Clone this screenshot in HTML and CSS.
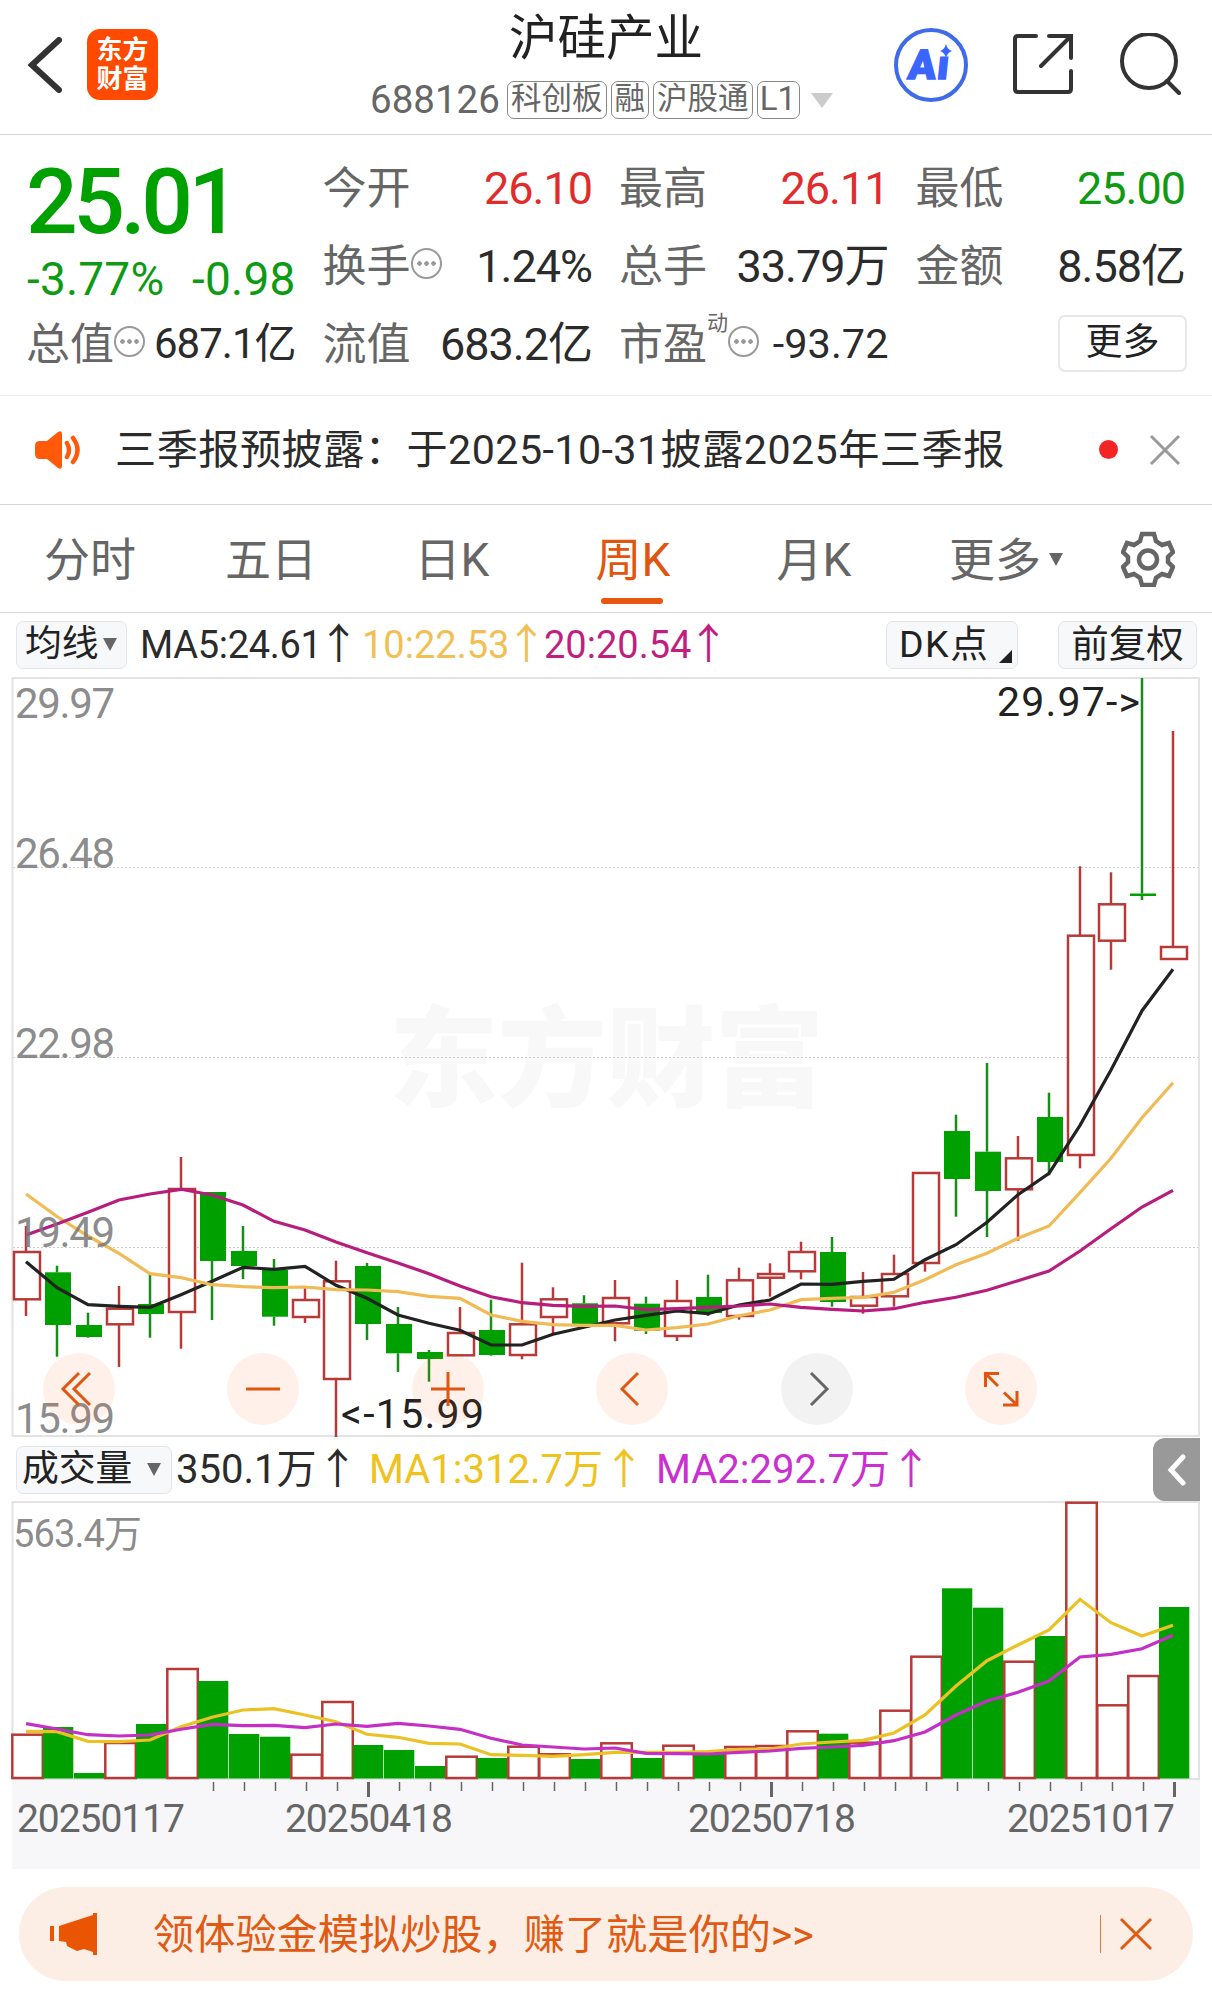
FILE: index.html
```html
<!DOCTYPE html>
<html lang="zh-CN">
<head>
    <meta charset="UTF-8">
    <meta name="viewport" content="width=device-width, initial-scale=1.0">
    <title>沪硅产业 688126</title>
    <link rel="stylesheet" href="styles.css">
</head>
<body>
    <header class="header">
        <div class="header-left">
            <svg class="back" width="34" height="56" viewBox="0 0 34 56"><path d="M31 3 L4 28 L31 53" /></svg>
            <div class="logo"><span>东方</span><span>财富</span></div>
        </div>
        <div class="header-title">
            <h1>沪硅产业</h1>
            <div class="tags">
                <span class="code">688126</span>
                <span class="tag">科创板</span>
                <span class="tag">融</span>
                <span class="tag">沪股通</span>
                <span class="tag tag-level">L1</span>
                <span class="tri tri-light"></span>
            </div>
        </div>
        <div class="header-icons">
            <svg width="76" height="76" viewBox="0 0 76 76">
                <circle cx="38" cy="38" r="35" fill="none" stroke="#3f6be8" stroke-width="4" />
                <text class="ai-text" transform="translate(14 52) skewX(-6)">Aı</text>
                <path d="M53 17 Q54.500 22.500 59 24 Q54.500 25.500 53 31 Q51.500 25.500 47 24 Q51.500 22.500 53 17 Z" fill="#3a66ff" />
            </svg>
            <svg class="line-icon" width="60" height="60" viewBox="0 0 60 60">
                <path d="M23 2 H5 Q2 2 2 5 V55 Q2 58 5 58 H55 Q58 58 58 55 V37 M36 2 H58 V24 M57 3 L28 32" />
            </svg>
            <svg class="line-icon" width="62" height="62" viewBox="0 0 62 62">
                <circle cx="29" cy="28" r="27" /><path d="M47 48 L59 60" />
            </svg>
        </div>
    </header>

    <section class="quote">
        <div class="price-block">
            <div class="price">25.01</div>
            <div class="change"><span>-3.77%</span><span>-0.98</span></div>
        </div>
        <div class="cell"><span class="label">今开</span><span class="value up">26.10</span></div>
        <div class="cell"><span class="label">最高</span><span class="value up">26.11</span></div>
        <div class="cell"><span class="label">最低</span><span class="value down">25.00</span></div>
        <div class="cell"><span class="label">换手</span><i class="dots"></i><span class="value">1.24%</span></div>
        <div class="cell"><span class="label">总手</span><span class="value">33.79万</span></div>
        <div class="cell"><span class="label">金额</span><span class="value">8.58亿</span></div>
        <div class="cell"><span class="label">总值</span><i class="dots"></i><span class="value small">687.1亿</span></div>
        <div class="cell"><span class="label">流值</span><span class="value mid">683.2亿</span></div>
        <div class="cell"><span class="label">市盈</span><sup>动</sup><i class="dots"></i><span class="value tiny">-93.72</span></div>
        <div class="cell"><button class="more-btn">更多</button></div>
    </section>

    <section class="notice">
        <svg width="48" height="40" viewBox="0 0 48 40">
            <path d="M6 11 H13 L24 2 Q28 0 28 4 V36 Q28 40 24 38 L13 29 H6 Q1 29 1 24 V16 Q1 11 6 11 Z" fill="#ff5a0a" />
            <path d="M33 13 Q37 20 33 27 M39 8 Q48 20 39 32" fill="none" stroke="#ff5a0a" stroke-width="4.500" stroke-linecap="round" />
        </svg>
        <p>三季报预披露：于2025-10-31披露2025年三季报</p>
        <span class="red-dot"></span>
        <svg class="close" width="32" height="32" viewBox="0 0 32 32"><path d="M2 2 L30 30 M30 2 L2 30" /></svg>
    </section>

    <nav class="tabs">
        <a class="tab">分时</a>
        <a class="tab">五日</a>
        <a class="tab">日K</a>
        <a class="tab active">周K</a>
        <a class="tab">月K</a>
        <a class="tab tab-more">更多<span class="tri"></span></a>
        <svg class="gear" width="54" height="56" viewBox="0 0 54 56">
            <path d="M21 3 H33 L35 10 L41 14 L48 12 L52 21 L47 26 V31 L52 36 L48 45 L41 43 L35 47 L33 54 H21 L19 47 L13 43 L6 45 L2 36 L7 31 V26 L2 21 L6 12 L13 14 L19 10 Z" />
            <circle cx="27" cy="28.500" r="9" />
        </svg>
    </nav>

    <section class="ma-bar">
        <span class="chip chip-ma">均线<span class="tri"></span></span>
        <span class="ma ma5">MA5:24.61<b>↑</b></span>
        <span class="ma ma10">10:22.53<b>↑</b></span>
        <span class="ma ma20">20:20.54<b>↑</b></span>
        <span class="chip chip-dk">DK点<i class="corner"></i></span>
        <span class="chip chip-fq">前复权</span>
    </section>

    <svg id="kline" class="kline" width="1212" height="762" viewBox="0 676 1212 762"></svg>

    <section class="vol-bar">
        <span class="chip chip-vol">成交量<span class="tri"></span></span>
        <span class="vol vol-now">350.1万<b>↑</b></span>
        <span class="vol vol-ma1">MA1:312.7万<b>↑</b></span>
        <span class="vol vol-ma2">MA2:292.7万<b>↑</b></span>
        <span class="drawer">
            <svg width="20" height="32" viewBox="0 0 20 32"><path d="M16 3 L4 16 L16 29" /></svg>
        </span>
    </section>

    <svg id="volume" class="volume" width="1212" height="368" viewBox="0 1501 1212 368"></svg>

    <footer class="banner">
        <svg width="48" height="42" viewBox="0 0 48 42">
            <path d="M0 13 H4 V28 H0 Z M9 13 L43 2 V0 H47 V42 H43 V39 L34 36 L27 38 L17 33 L16 29 L9 28 Z" fill="#ea5504" />
        </svg>
        <p>领体验金模拟炒股，赚了就是你的&gt;&gt;</p>
        <span class="divider"></span>
        <svg class="close" width="34" height="34" viewBox="0 0 34 34"><path d="M2 2 L32 32 M32 2 L2 32" /></svg>
    </footer>

    <script src="chart.js"></script>
</body>
</html>
```

FILE: styles.css
```css
* {
    margin: 0;
    padding: 0;
    box-sizing: border-box;
}

body {
    width: 1212px;
    background-color: #fff;
    color: #2b2b2b;
    font-family: Roboto, "Noto Sans CJK SC", sans-serif;
    line-height: 1;
}

svg {
    display: block;
    flex-shrink: 0;
}

.tri {
    display: inline-block;
    border-left: 7.5px solid transparent;
    border-right: 7.5px solid transparent;
    border-top: 13px solid #666;
}

.tri-light {
    border-left-width: 11px;
    border-right-width: 11px;
    border-top: 15px solid #ccc;
}

.close {
    fill: none;
    stroke: #999;
    stroke-width: 3;
}

/* header */
.header {
    height: 135px;
    display: grid;
    grid-template-columns: 360px 1fr 360px;
    border-bottom: 1px solid #d5d5d5;
}

.header-left {
    display: flex;
    align-items: center;
    height: 129px;
    padding-left: 28px;
}

.back {
    fill: none;
    stroke: #333;
    stroke-width: 6;
    stroke-linecap: round;
}

.logo {
    width: 71px;
    height: 71px;
    margin-left: 25px;
    border-radius: 13px;
    background-color: #ff4a00;
    color: #fff;
    font-size: 26px;
    font-weight: bold;
    display: flex;
    flex-direction: column;
    align-items: center;
    justify-content: center;
    gap: 3px;
}

.header-title {
    padding-top: 15px;
}

.header-title h1 {
    font-size: 48.5px;
    font-weight: normal;
    text-align: center;
    white-space: nowrap;
    color: #222;
}

.tags {
    display: flex;
    align-items: center;
    height: 38px;
    margin-top: 17.5px;
    padding-left: 10px;
    gap: 4px;
    white-space: nowrap;
}

.code {
    width: 133px;
    font-size: 38.5px;
    color: #666;
}

.tag {
    height: 38px;
    padding: 0 3px;
    border: 1.5px solid #888;
    border-radius: 7px;
    font-size: 30.5px;
    line-height: 34px;
    color: #666;
}

.tag-level {
    width: 43px;
    padding: 0;
    font-size: 33px;
    text-align: center;
}

.tags .tri {
    margin-left: 7px;
}

.header-icons {
    display: flex;
    align-items: center;
    height: 129px;
    padding-left: 41px;
}

.header-icons .line-icon {
    margin-left: 44px;
    margin-bottom: 1px;
    fill: none;
    stroke: #333;
    stroke-width: 4;
    stroke-linecap: round;
}

.header-icons .line-icon + .line-icon {
    margin-left: 47px;
}

.ai-text {
    font-size: 41px;
    font-weight: 900;
    letter-spacing: 1px;
    fill: #3a66ff;
    stroke: #3a66ff;
    stroke-width: 1.500;
}

/* quote */
.quote {
    display: grid;
    grid-template-columns: repeat(4, 1fr);
    grid-template-rows: repeat(3, 78px);
    column-gap: 29px;
    padding: 13px 27px 13px 28px;
    border-bottom: 1px solid #ececec;
}

.price-block {
    grid-row: span 2;
    color: #00a000;
}

.price {
    margin-top: 9px;
    margin-left: -2px;
    font-size: 91px;
    font-weight: 500;
    letter-spacing: -4.500px;
}

.change {
    display: flex;
    justify-content: space-between;
    margin-top: 8px;
    font-size: 46px;
    letter-spacing: 0.2px;
    margin-left: -1px;
    color: #0f9a14;
}

.cell {
    display: flex;
    align-items: center;
    white-space: nowrap;
}

.label {
    margin-left: -2px;
    padding-top: 4px;
    font-size: 44px;
    color: #666;
}

.value {
    margin-left: auto;
    padding-top: 2px;
    font-size: 45px;
    letter-spacing: -1px;
}

.small {
    font-size: 42px;
}

.mid {
    font-size: 45px;
}

.tiny {
    font-size: 41.5px;
    letter-spacing: 0;
}

.up {
    color: #e02c2c;
}

.down {
    color: #0f9a14;
}

.cell sup {
    align-self: flex-start;
    margin-top: 9px;
    font-size: 21px;
    color: #666;
}

.dots {
    width: 31px;
    height: 31px;
    flex-shrink: 0;
    border: 2px solid #999;
    border-radius: 50%;
    margin-bottom: 3px;
    background: radial-gradient(circle, #999 2px, transparent 2.5px) center / 7px 7px no-repeat,
        radial-gradient(circle, #999 2px, transparent 2.5px) 3px center / 7px 7px no-repeat,
        radial-gradient(circle, #999 2px, transparent 2.5px) 17px center / 7px 7px no-repeat;
}

.more-btn {
    width: 129px;
    height: 57px;
    margin-left: auto;
    margin-right: -2px;
    padding-bottom: 2px;
    background-color: #fff;
    border: 2px solid #e8e8ec;
    border-radius: 7px;
    font: inherit;
    font-size: 37px;
    color: #222;
}

/* notice */
.notice {
    display: flex;
    align-items: center;
    height: 109px;
    padding: 0 31px 1px 34px;
    border-bottom: 1px solid #d5d5d5;
}

.notice p {
    margin-left: 33px;
    padding-top: 2px;
    font-size: 41.2px;
    letter-spacing: 0.45px;
    white-space: nowrap;
}

.red-dot {
    width: 19px;
    height: 19px;
    margin-left: auto;
    margin-right: 31px;
    border-radius: 50%;
    background-color: #f52424;
}

/* tabs */
.tabs {
    display: flex;
    align-items: center;
    height: 108px;
    padding: 0 37px 0 44px;
    border-bottom: 1px solid #d5d5d5;
}

.tab {
    position: relative;
    width: 92px;
    margin-right: 89px;
    padding-top: 2px;
    font-size: 46px;
    color: #666;
    text-align: center;
    white-space: nowrap;
}

.tab.active {
    color: #e0560f;
}

.tab.active::after {
    content: "";
    position: absolute;
    left: 14px;
    bottom: -21px;
    width: 62px;
    height: 6px;
    border-radius: 3px;
    background-color: #e8560f;
}

.tab-more {
    display: flex;
    align-items: center;
    width: auto;
    gap: 8px;
    margin-right: 0;
}

.gear {
    margin-left: auto;
    fill: none;
    stroke: #666;
    stroke-width: 4.500;
}

/* indicator bars */
.ma-bar {
    display: flex;
    align-items: center;
    height: 63px;
    padding: 0 15px 0 16px;
}

.chip {
    display: flex;
    align-items: center;
    height: 48px;
    background-color: #f7f8fa;
    border: 1.5px solid #e3e5e9;
    border-radius: 7px;
    font-size: 36.8px;
    color: #222;
    white-space: nowrap;
}

.chip-ma {
    width: 111px;
    padding-left: 8px;
}

.chip-ma .tri {
    margin-left: 4px;
}

.ma,
.vol {
    display: flex;
    align-items: center;
    padding-top: 1px;
    font-size: 38px;
    white-space: nowrap;
}

.ma b,
.vol b {
    width: 24px;
    margin-left: 5px;
    font-size: 42px;
    font-weight: normal;
    display: flex;
    justify-content: center;
}

.ma5 {
    width: 222px;
    margin-left: 13px;
    letter-spacing: -0.3px;
}

.ma10 {
    width: 182px;
    color: #f2bf55;
}

.ma20 {
    color: #c01f80;
}

.chip-dk {
    position: relative;
    width: 132px;
    margin-left: auto;
    padding-left: 12px;
    letter-spacing: 1.500px;
    font-size: 37.500px;
}

.corner {
    position: absolute;
    right: 5px;
    bottom: 5px;
    border-left: 13px solid transparent;
    border-bottom: 13px solid #222;
}

.chip-fq {
    width: 139px;
    margin-left: 40px;
    justify-content: center;
    font-size: 37.500px;
}

.vol-bar {
    display: flex;
    align-items: center;
    height: 63px;
    padding: 0 12px 0 16px;
}

.chip-vol {
    width: 156px;
    padding-left: 5px;
}

.chip-vol .tri {
    margin-left: 15px;
}

.vol {
    font-size: 40px;
}

.vol b {
    margin-left: 9px;
}

.vol-now {
    width: 193px;
    margin-left: 4px;
}

.vol-ma1 {
    width: 287px;
    color: #efc21d;
}

.vol-ma2 {
    color: #cb2fd0;
}

.drawer {
    display: flex;
    align-items: center;
    justify-content: center;
    width: 47px;
    height: 63px;
    margin-left: auto;
    border-radius: 12px 0 0 12px;
    background-color: #999;
}

.drawer path {
    fill: none;
    stroke: #fff;
    stroke-width: 5;
    stroke-linecap: round;
}

/* charts */
.kline,
.volume {
    overflow: visible;
}

.watermark {
    font-size: 109px;
    font-weight: 900;
    fill: #f8f8f8;
}

.axis {
    font-size: 42px;
    fill: #777;
    fill-opacity: 0.85;
}

.axis-vol {
    font-size: 38px;
}

.mark {
    font-size: 41px;
    fill: #222;
}

.date {
    font-size: 39px;
    fill: #666;
}

.frame {
    fill: none;
    stroke: #e3e3e3;
    stroke-width: 2;
}

.grid-line {
    stroke: #ccc;
    stroke-width: 1;
    stroke-dasharray: 2 2;
}

.rise {
    fill: #fff;
    stroke: #b83a38;
    stroke-width: 2.500;
}

.fall {
    fill: #00a000;
    stroke: none;
}

.wick-rise {
    stroke: #b83a38;
    stroke-width: 2.500;
}

.wick-fall {
    stroke: #168f16;
    stroke-width: 2.500;
}

.ma-line {
    fill: none;
    stroke-width: 3.200;
}

.axis-bg {
    fill: #f7f7fa;
}

.tick {
    stroke: #666;
    stroke-width: 1.500;
}

.tick-big {
    stroke-width: 3;
}

.tool {
    fill: #ff6414;
    fill-opacity: 0.09;
}

.tool-off {
    fill: #000;
    fill-opacity: 0.05;
}

.tool-icon {
    fill: none;
    stroke: #e0560f;
    stroke-width: 3;
}

.tool-icon-off {
    stroke: #666;
}

/* banner */
.banner {
    display: flex;
    align-items: center;
    height: 94px;
    margin: 18px 19px 0 19px;
    padding: 0 40px 0 31px;
    border-radius: 47px;
    background-color: #fceee5;
    color: #e05a14;
}

.banner p {
    margin-left: 55px;
    padding-top: 3px;
    font-size: 41.2px;
    white-space: nowrap;
}

.divider {
    width: 1.5px;
    height: 38px;
    margin-left: auto;
    margin-right: 18px;
    background-color: #e07a40;
}

.banner .close {
    stroke: #e05a14;
}
```

FILE: chart.js
```js
const STEP = 31;
const FIRST = 26;

// [type, body top, body bottom, wick top, wick bottom, volume top]
const candles = [
    ['r', 1252, 1299.3, 1226, 1316, 1734.7],
    ['g', 1272.3, 1325, 1265.7, 1356.7, 1727],
    ['g', 1325, 1337, 1312.7, 1337.7, 1773],
    ['r', 1308.7, 1324.3, 1286, 1367, 1743],
    ['g', 1304, 1314, 1273, 1337.7, 1724],
    ['r', 1189, 1312, 1157, 1348.7, 1669],
    ['g', 1192, 1261, 1192, 1320, 1681],
    ['g', 1251, 1266, 1226, 1279, 1734],
    ['g', 1270, 1316.7, 1259, 1325.7, 1736.7],
    ['r', 1300, 1317, 1288, 1323, 1754.7],
    ['r', 1281.3, 1379, 1260.7, 1437, 1702],
    ['g', 1266, 1324, 1263, 1340, 1745],
    ['g', 1324, 1353.3, 1307, 1372, 1750],
    ['g', 1352, 1359, 1350, 1381.7, 1766],
    ['r', 1333, 1355.3, 1307, 1355.3, 1756.7],
    ['g', 1330, 1355, 1299.7, 1355.7, 1758],
    ['r', 1324.3, 1355, 1262.7, 1359.3, 1746.7],
    ['r', 1299.3, 1317, 1287.3, 1334, 1754.3],
    ['g', 1303.3, 1324, 1295.3, 1324, 1759],
    ['r', 1298, 1323.3, 1280, 1341.3, 1743.3],
    ['g', 1303.7, 1330.7, 1296.7, 1334, 1758],
    ['r', 1301, 1336, 1280, 1341, 1745.7],
    ['g', 1297, 1313, 1274.7, 1316, 1753],
    ['r', 1280.3, 1316, 1267.7, 1319.7, 1747],
    ['r', 1274, 1277.7, 1263.3, 1296.7, 1746],
    ['r', 1252, 1271.3, 1241.7, 1279.3, 1731.3],
    ['g', 1252, 1302, 1237, 1306.7, 1733.7],
    ['r', 1297, 1305.7, 1272, 1313.7, 1742.7],
    ['r', 1274, 1296.3, 1254.7, 1306.7, 1710.7],
    ['r', 1173, 1263, 1173, 1271.7, 1656.7],
    ['g', 1131, 1179, 1114.7, 1216.7, 1588.3],
    ['g', 1151.7, 1191, 1063, 1237, 1607.7],
    ['r', 1158.3, 1189.3, 1136, 1240.7, 1661.7],
    ['g', 1117, 1162, 1092.7, 1175.3, 1636],
    ['r', 935.7, 1155, 866.3, 1168.3, 1502.7],
    ['r', 904.3, 940.7, 872.3, 969.7, 1705.3],
    ['g', 893.5, 896, 678, 900, 1676],
    ['r', 947, 959, 731, 947, 1607]
];

const ma5 = [1261.7, 1287.7, 1304.7, 1306.3, 1307.3, 1294.7, 1281.3, 1267.3, 1269.3, 1266.3, 1285.3, 1298.3, 1315,
    1323.3, 1330.3, 1345, 1345, 1334.3, 1327.3, 1320, 1315.3, 1311, 1313.7, 1305, 1300, 1284,
    1284.3, 1281.3, 1279.3, 1259.7, 1244.7, 1222.3, 1194.7, 1173.3, 1125.3, 1070, 1010.7, 969.3];
const ma10 = [1194, 1216.5, 1236, 1253.3, 1273.7, 1277.7, 1284.7, 1286.7, 1287.7, 1287, 1289.7, 1290, 1291.7,
    1296.3, 1298.3, 1315, 1321.3, 1324.7, 1325.3, 1325.3, 1330, 1327.7, 1324, 1315.7, 1310, 1299.7,
    1298.3, 1297.3, 1292.3, 1279.7, 1264.7, 1253.3, 1238.3, 1226, 1192.7, 1158.3, 1117.7, 1082.7];
const ma20 = [1235, 1224, 1212.3, 1200, 1194, 1189.3, 1195, 1205, 1221.3, 1230, 1242, 1252.7, 1263,
    1273.7, 1286, 1296.7, 1302.7, 1305.3, 1306.3, 1306, 1309.7, 1308.7, 1307.3, 1306, 1304, 1307.3,
    1309.3, 1311, 1308.7, 1302.3, 1297.3, 1290.3, 1280.7, 1271, 1251, 1228.7, 1207, 1190.3];
const volMa1 = [1731.3, 1731.7, 1741.3, 1741.7, 1740, 1726.7, 1717.3, 1710, 1708.7, 1715, 1721.7, 1734.3, 1737.3,
    1743.3, 1744, 1754.7, 1755.3, 1756.3, 1754.7, 1752.3, 1752.3, 1752.3, 1751.5, 1749.3, 1749, 1744,
    1742, 1740.3, 1733, 1715, 1686, 1660.7, 1645, 1630, 1599.3, 1622.7, 1636, 1625.3];
const volMa2 = [1723.7, 1729, 1734.7, 1736, 1735, 1729.3, 1724.3, 1725.7, 1725.3, 1727.7, 1724, 1726.3, 1723.3,
    1726, 1729.3, 1738.3, 1745, 1747, 1749, 1748, 1753.3, 1753.7, 1754, 1752.3, 1751, 1748.3,
    1747, 1745.3, 1740.7, 1732, 1715, 1701, 1692.3, 1681, 1657, 1654.3, 1648.7, 1635.3];

// volume colour differs from the candle colour in the last two weeks
const volType = candles.map(c => c[0]);
volType[36] = 'r';
volType[37] = 'g';

function rect(cls, x, y, w, h) {
    return `<rect class="${cls}" x="${x}" y="${y}" width="${w}" height="${h}" />`;
}

function line(cls, x1, y1, x2, y2) {
    return `<line class="${cls}" x1="${x1}" y1="${y1}" x2="${x2}" y2="${y2}" />`;
}

function curve(points, color) {
    const list = points.map((y, i) => `${FIRST + i * STEP},${y}`).join(' ');
    return `<polyline class="ma-line" stroke="${color}" points="${list}" />`;
}

function label(cls, x, y, width, text) {
    return `<text class="${cls}" x="${x}" y="${y}" textLength="${width}">${text}</text>`;
}

function drawKline() {
    let out = label('watermark', 389, 1098, 435, '东方财富');
    [867.5, 1057.5, 1247.5].forEach(y => out += line('grid-line', 13, y, 1199, y));
    out += rect('frame', 12.5, 678, 1186.5, 758);

    candles.forEach(([type, top, bottom, high, low], i) => {
        const x = FIRST + i * STEP;
        const wick = type === 'r' ? 'wick-rise' : 'wick-fall';
        if (high < top) out += line(wick, x, high, x, top);
        if (low > bottom) out += line(wick, x, bottom, x, low);
        out += rect(type === 'r' ? 'rise' : 'fall', x - 12, top, 26, bottom - top);
    });

    out += curve(ma5, '#222') + curve(ma10, '#f0bb55') + curve(ma20, '#b81c7c');

    out += label('axis', 15, 718, 100, '29.97');
    out += label('axis', 15, 868, 100, '26.48');
    out += label('axis', 15, 1058, 100, '22.98');
    out += label('axis', 15, 1247, 100, '19.49');
    out += label('axis', 15, 1433, 100, '15.99');
    out += label('mark', 997, 716, 143, '29.97-&gt;');
    out += label('mark', 341, 1428, 143, '&lt;-15.99');

    [79, 263, 448, 632, 817, 1001].forEach(x => {
        out += `<circle class="${x === 817 ? 'tool-off' : 'tool'}" cx="${x}" cy="1389" r="36" />`;
    });
    out += '<path class="tool-icon" d="M79 1373 L63 1389 L79 1405 M90 1373 L74 1389 L90 1405" />';
    out += '<path class="tool-icon" d="M246 1389 H280 M431 1389 H465 M448 1372 V1406" />';
    out += '<path class="tool-icon" d="M638 1373 L622 1389 L638 1405" />';
    out += '<path class="tool-icon tool-icon-off" d="M811 1373 L827 1389 L811 1405" />';
    out += '<path class="tool-icon" d="M985.5 1387 V1373.5 H999 M986 1374 L998 1386 M1003 1405 H1017 V1391 M1016.5 1404.5 L1004 1392.500" />';
    document.getElementById('kline').innerHTML = out;
}

function drawVolume() {
    let out = rect('axis-bg', 12, 1780, 1188, 89);
    out += rect('frame', 12.5, 1502, 1186.5, 277);
    out += label('axis axis-vol', 13, 1547, 129, '563.4万');

    candles.forEach((c, i) => {
        const x = 12 + i * STEP;
        if (volType[i] === 'r') {
            out += rect('rise', x + 0.3, c[5], 30.5, 1778 - c[5]);
        } else {
            out += rect('fall', x, c[5], 30.3, 1778.5 - c[5]);
        }
    });
    out += curve(volMa1, '#eac224') + curve(volMa2, '#c42fc6');

    for (let i = 6; i < 38; i++) {
        const x = 27.5 + i * STEP;
        const big = i === 11 || i === 24 || i === 37;
        out += line(big ? 'tick tick-big' : 'tick', x, 1782, x, big ? 1797 : 1791);
    }
    out += label('date', 17, 1832, 168, '20250117');
    out += label('date', 285, 1832, 168, '20250418');
    out += label('date', 688, 1832, 168, '20250718');
    out += label('date', 1007, 1832, 168, '20251017');
    document.getElementById('volume').innerHTML = out;
}

drawKline();
drawVolume();
```
